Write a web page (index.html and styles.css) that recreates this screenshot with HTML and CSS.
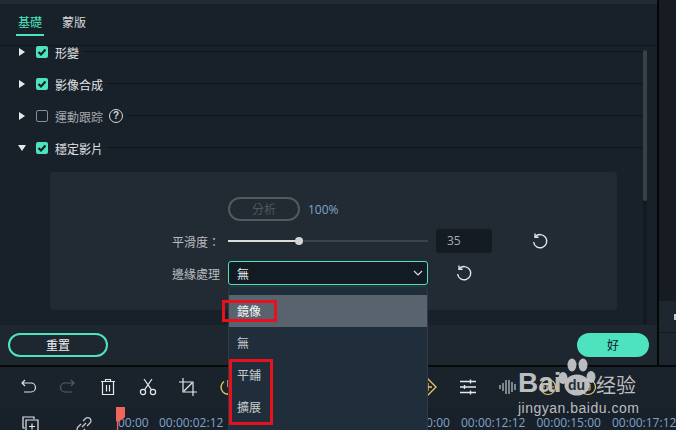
FILE: index.html
```html
<!DOCTYPE html>
<html lang="zh-Hant">
<head>
    <meta charset="UTF-8">
    <title>穩定影片</title>
    <link rel="stylesheet" href="styles.css">
</head>
<body>
    <div class="app">
        <div class="main">
            <div class="panel">
                <div class="tabs">
                    <span class="tab active">基礎</span>
                    <span class="tab">蒙版</span>
                </div>
                <div class="scroll-area">
                    <div class="props">
                        <div class="row">
                            <span class="arrow"></span>
                            <span class="check on"><svg width="12" height="12" viewBox="0 0 12 12"><path d="M2.500 6l2.500 2.500 4.500-5" fill="none" stroke="#10181f" stroke-width="2"/></svg></span>
                            <span class="row-label">形變</span>
                        </div>
                        <div class="row">
                            <span class="arrow"></span>
                            <span class="check on"><svg width="12" height="12" viewBox="0 0 12 12"><path d="M2.500 6l2.500 2.500 4.500-5" fill="none" stroke="#10181f" stroke-width="2"/></svg></span>
                            <span class="row-label">影像合成</span>
                        </div>
                        <div class="row">
                            <span class="arrow"></span>
                            <span class="check"></span>
                            <span class="row-label dim">運動跟踪</span>
                            <span class="help">?</span>
                        </div>
                        <div class="row">
                            <span class="arrow down"></span>
                            <span class="check on"><svg width="12" height="12" viewBox="0 0 12 12"><path d="M2.500 6l2.500 2.500 4.500-5" fill="none" stroke="#10181f" stroke-width="2"/></svg></span>
                            <span class="row-label">穩定影片</span>
                        </div>
                        <div class="card">
                            <div class="analyze-line">
                                <span class="analyze">分析</span>
                                <span class="percent">100%</span>
                            </div>
                            <div class="smooth-line">
                                <span class="field-label">平滑度：</span>
                                <div class="slider"><div class="slider-fill"></div><div class="slider-knob"></div></div>
                                <span class="num">35</span>
                                <svg class="reset" width="18" height="18" viewBox="0 0 18 18"><path d="M4.200 4.800A6.600 6.600 0 1 1 2.600 10" fill="none" stroke="#e4e6e8" stroke-width="1.400"/><path d="M4 1.600v3.600h3.600" fill="none" stroke="#e4e6e8" stroke-width="1.400"/></svg>
                            </div>
                            <div class="edge-line">
                                <span class="field-label">邊緣處理</span>
                                <div class="select">
                                    <span>無</span>
                                    <svg width="10" height="6" viewBox="0 0 10 6"><path d="M1 1l4 4 4-4" fill="none" stroke="#d8dadc" stroke-width="1.200"/></svg>
                                </div>
                                <svg class="reset" width="18" height="18" viewBox="0 0 18 18"><path d="M4.200 4.800A6.600 6.600 0 1 1 2.600 10" fill="none" stroke="#e4e6e8" stroke-width="1.400"/><path d="M4 1.600v3.600h3.600" fill="none" stroke="#e4e6e8" stroke-width="1.400"/></svg>
                            </div>
                        </div>
                    </div>
                    <div class="scrollbar"><div class="scroll-thumb"></div></div>
                </div>
                <div class="footer">
                    <span class="btn-reset">重置</span>
                    <span class="btn-ok">好</span>
                </div>
            </div>
            <div class="side">
                <div class="side-top"></div>
                <div class="side-mid"><span class="side-dot"></span></div>
                <div class="side-bottom"></div>
            </div>
        </div>

        <div class="toolbar">
            <svg width="18" height="18" viewBox="0 0 18 18"><path d="M3 5h9a4 4 0 0 1 0 9H5M6 2L3 5l3 3" fill="none" stroke="#dfe1e3" stroke-width="1.200"/></svg>
            <svg width="18" height="18" viewBox="0 0 18 18"><path d="M15 5H6a4 4 0 0 0 0 9h7M12 2l3 3-3 3" fill="none" stroke="#565c62" stroke-width="1.200"/></svg>
            <svg width="18" height="18" viewBox="0 0 18 18"><path d="M2 3.500h14M6.500 3V1.500h5V3M3.500 4v12.500h11V4M7.500 7v6.500M10.500 7v6.500" fill="none" stroke="#e6e8ea" stroke-width="1.200"/></svg>
            <svg width="18" height="18" viewBox="0 0 18 18"><circle cx="4" cy="14" r="2.600" fill="none" stroke="#e6e8ea" stroke-width="1.200"/><circle cx="14" cy="14" r="2.600" fill="none" stroke="#e6e8ea" stroke-width="1.200"/><path d="M5.500 11.800L13 1M12.500 11.800L5 1" fill="none" stroke="#e6e8ea" stroke-width="1.200"/></svg>
            <svg width="18" height="18" viewBox="0 0 18 18"><path d="M4 0v14h14M0 4h14v14M5 13L13 5" fill="none" stroke="#e6e8ea" stroke-width="1.200"/></svg>
            <svg width="18" height="18" viewBox="0 0 18 18"><path d="M5 3.500a7 7 0 1 0 8 0M9 2v7" fill="none" stroke="#e9c766" stroke-width="1.400"/></svg>
            <span class="tool-gap"></span>
            <svg width="18" height="18" viewBox="0 0 18 18"><path d="M9 1l8 8-8 8-8-8zM5 9h8M9 5v8" fill="none" stroke="#e9c766" stroke-width="1.300"/></svg>
            <svg width="18" height="18" viewBox="0 0 18 18"><path d="M1 3.500h16M1 9h16M1 14.500h16M11.500 1.500v4M5.500 7v4M11.500 12.500v4" fill="none" stroke="#e6e8ea" stroke-width="1.400"/></svg>
            <svg width="18" height="18" viewBox="0 0 18 18"><path d="M1 7v4M4 5v8M7 2v14M10 2v14M13 4v10M16 6v6" fill="none" stroke="#e6e8ea" stroke-width="1"/></svg>
            <svg width="18" height="18" viewBox="0 0 18 18"><circle cx="9" cy="9" r="7.500" fill="none" stroke="#e9c766" stroke-width="1.200"/><path d="M5 8v2M8 5v8M11 6v6M14 8v2" fill="none" stroke="#e9c766" stroke-width="1"/></svg>
            <svg width="18" height="18" viewBox="0 0 18 18"><circle cx="9" cy="9" r="7.500" fill="none" stroke="#e9c766" stroke-width="1.200"/><path d="M7 6h4v6H7M8 9h3" fill="none" stroke="#e9c766" stroke-width="1"/></svg>
        </div>

        <div class="ruler">
            <svg class="ruler-icon" width="18" height="18" viewBox="0 0 18 18"><path d="M12 3V1H1v11h2M4 4h12v13H4zM10 7.500v6M7 10.500h6" fill="none" stroke="#e6e8ea" stroke-width="1.200"/></svg>
            <svg class="ruler-icon link" width="18" height="18" viewBox="0 0 18 18"><path d="M8 5l2.500-2.500a3 3 0 0 1 4.500 4.500L12 10M10 13l-2.500 2.500a3 3 0 0 1-4.500-4.500L6 8M7 11l4-4" fill="none" stroke="#c7cacd" stroke-width="1.300"/></svg>
            <div class="times">
                <span class="time first">00:00</span>
                <span class="time">00:00:02:12</span>
                <span class="time after-menu">00:00:10:00</span>
                <span class="time">00:00:12:12</span>
                <span class="time">00:00:15:00</span>
                <span class="time">00:00:17:12</span>
            </div>
        </div>

        <div class="playhead"></div>

        <div class="dropdown">
            <div class="opt hover">鏡像</div>
            <div class="opt">無</div>
            <div class="opt">平鋪</div>
            <div class="opt">擴展</div>
        </div>

        <div class="mark mark-a"></div>
        <div class="mark mark-b"></div>

        <div class="watermark">
            <div class="wm-top">
                <span class="wm-bai">Bai</span>
                <div class="wm-paw">
                    <svg width="38" height="38" viewBox="0 0 38 38"><ellipse cx="5" cy="20" rx="4.500" ry="6" fill="#c9cacc"/><ellipse cx="14" cy="7" rx="4.500" ry="6.500" fill="#c9cacc"/><ellipse cx="25" cy="7" rx="4.500" ry="6.500" fill="#c9cacc"/><ellipse cx="33" cy="19" rx="4.500" ry="6" fill="#c9cacc"/><ellipse cx="19" cy="27" rx="12.500" ry="10.500" fill="#c9cacc"/></svg>
                    <span class="wm-du">du</span>
                </div>
                <span class="wm-cn">经验</span>
            </div>
            <div class="wm-url">jingyan.baidu.com</div>
        </div>
    </div>
</body>
</html>
```

FILE: styles.css
```css
* {
    box-sizing: border-box;
}
html, body {
    margin: 0;
    padding: 0;
}
body {
    width: 676px;
    height: 430px;
    overflow: hidden;
    font-family: "Noto Sans CJK TC", "Noto Sans", sans-serif;
    background: #000;
}
.app {
    position: relative;
    width: 676px;
    height: 430px;
    display: flex;
    flex-direction: column;
    overflow: hidden;
    background: #1e2630;
}
.main {
    display: flex;
    height: 367px;
    flex: none;
    border-bottom: 2px solid #08090b;
}
.panel {
    width: 657px;
    display: flex;
    flex-direction: column;
    background: #18202a;
    border-top: 4px solid #222b35;
}
.tabs {
    display: flex;
    gap: 16px;
    height: 32px;
    flex: none;
    padding: 7px 0 0 16px;
}
.tab {
    width: 28px;
    height: 25px;
    font-size: 12px;
    line-height: 22px;
    text-align: center;
    color: #d5d8da;
}
.tab.active {
    color: #4de3bf;
    border-bottom: 2px solid #4de3bf;
}
.scroll-area {
    flex: 1;
    display: flex;
    min-height: 0;
    background: linear-gradient(#10161c, #10161c) no-repeat 0 9px / 100% 1px;
}
.props {
    width: 643px;
}
.row {
    display: flex;
    align-items: center;
    height: 32px;
    padding-left: 19px;
}
.row::after {
    content: "";
    flex: 1;
    height: 1px;
    margin: -1px 0 0 4px;
    background: #10161c;
}
.arrow {
    width: 0;
    height: 0;
    margin-right: 11px;
    border-left: 6px solid #e6e8ea;
    border-top: 4px solid transparent;
    border-bottom: 4px solid transparent;
}
.arrow.down {
    margin-left: -1px;
    margin-right: 10px;
    border-top: 6px solid #e6e8ea;
    border-left: 4px solid transparent;
    border-right: 4px solid transparent;
    border-bottom: 0;
}
.check {
    width: 12px;
    height: 12px;
    margin-right: 7px;
    border: 1px solid #8b8f93;
    border-radius: 2px;
    display: flex;
}
.check.on {
    background: #4de3bf;
    border: 0;
}
.row-label {
    font-size: 12px;
    color: #e2e4e6;
}
.row-label.dim {
    color: #a4a8ac;
}
.help {
    width: 14px;
    height: 14px;
    margin-left: 6px;
    border: 1px solid #d8dadc;
    border-radius: 50%;
    font-family: "Liberation Sans", sans-serif;
    font-size: 10px;
    font-weight: bold;
    line-height: 12px;
    text-align: center;
    color: #d8dadc;
}
.card {
    width: 567px;
    height: 138px;
    margin: 8px 0 0 50px;
    padding-top: 25px;
    background: #222a34;
    border-radius: 4px;
}
.analyze-line {
    display: flex;
    align-items: center;
    height: 24px;
    margin-left: 178px;
}
.analyze {
    width: 72px;
    height: 24px;
    border: 2px solid #55595c;
    border-radius: 12px;
    font-size: 12px;
    line-height: 19px;
    text-align: center;
    color: #4f5963;
}
.percent {
    margin-left: 8px;
    font-family: "Open Sans", sans-serif;
    font-size: 12px;
    color: #7fa4c9;
}
.smooth-line, .edge-line {
    display: flex;
    align-items: center;
    height: 24px;
    margin: 8px 0 0 122px;
}
.field-label {
    width: 56px;
    font-size: 12px;
    white-space: nowrap;
    color: #b9bcbf;
}
.slider {
    position: relative;
    width: 200px;
    height: 2px;
    background: #3c424a;
}
.slider-fill {
    width: 71px;
    height: 2px;
    background: #dcdcdc;
}
.slider-knob {
    position: absolute;
    left: 67px;
    top: -3px;
    width: 8px;
    height: 8px;
    border-radius: 50%;
    background: #d4d4d4;
}
.num {
    width: 56px;
    height: 24px;
    margin-left: 8px;
    padding-left: 11px;
    background: #141b23;
    border-radius: 3px;
    font-family: "Open Sans", sans-serif;
    font-size: 12px;
    line-height: 24px;
    color: #a6abb0;
}
.smooth-line .reset {
    margin-left: 39px;
}
.edge-line .reset {
    margin-left: 27px;
}
.select {
    display: flex;
    align-items: center;
    justify-content: space-between;
    width: 200px;
    height: 24px;
    padding: 0 4px 0 8px;
    background: #121a23;
    border: 1px solid #4de3bf;
    border-radius: 3px;
    font-size: 12px;
    color: #e8eaec;
}
.scrollbar {
    width: 4px;
    height: 274px;
    margin-top: 14px;
    background: #121920;
}
.scroll-thumb {
    width: 4px;
    height: 151px;
    background: #3b4044;
    border-radius: 2px;
}
.footer {
    display: flex;
    justify-content: space-between;
    align-items: center;
    height: 40px;
    flex: none;
    padding: 0 8px;
    background: #1e2630;
}
.btn-reset {
    width: 100px;
    height: 24px;
    border: 2px solid #4de3bf;
    border-radius: 12px;
    font-size: 12px;
    line-height: 19px;
    text-align: center;
    color: #eceef0;
}
.btn-ok {
    width: 72px;
    height: 24px;
    background: #4de3bf;
    border-radius: 12px;
    font-size: 12px;
    line-height: 23px;
    text-align: center;
    color: #10181f;
}
.side {
    flex: 1;
    display: flex;
    flex-direction: column;
    border-left: 2px solid #050608;
}
.side-top {
    height: 301px;
    background: #161c22;
}
.side-mid {
    height: 32px;
    display: flex;
    align-items: center;
    background: #1e2630;
    border-bottom: 1px solid #12181e;
}
.side-dot {
    width: 2px;
    height: 6px;
    margin-left: 15px;
    background: #c9cbce;
}
.side-bottom {
    flex: 1;
    background: #1e2630;
}
.toolbar {
    display: flex;
    align-items: center;
    gap: 22px;
    height: 40px;
    flex: none;
    padding-left: 19px;
    background: #1a222c;
}
.tool-gap {
    width: 138px;
}
.ruler {
    flex: 1;
    display: flex;
    padding-top: 9px;
    background: #18202a linear-gradient(90deg, #8a9199 1px, transparent 1px) repeat-x 118px 100% / 25px 2px;
}
.ruler-icon {
    flex: none;
    margin-left: 22px;
}
.ruler-icon.link {
    margin-left: 35px;
}
.times {
    display: flex;
    flex: none;
    margin-left: 25px;
    font-family: "Open Sans", sans-serif;
    font-size: 12px;
    line-height: 14px;
    color: #7fa4c9;
}
.time {
    width: 75.5px;
    white-space: nowrap;
    flex: none;
}
.time.first {
    width: 41px;
}
.time.after-menu {
    margin-left: 151px;
}
.playhead {
    position: absolute;
    left: 116px;
    top: 407px;
    width: 9px;
    height: 23px;
    background: #f2665a;
    clip-path: polygon(0 0, 100% 0, 100% 45%, 25% 65%, 25% 100%, 10% 100%, 10% 65%, 0 60%);
}
.dropdown {
    position: absolute;
    left: 228px;
    top: 286px;
    width: 200px;
    height: 150px;
    padding-top: 8px;
    background: #202e3b;
    border: 1px solid #2e3a46;
    border-radius: 4px;
}
.opt {
    height: 32px;
    padding-left: 8px;
    font-size: 12px;
    line-height: 32px;
    color: #c8cbce;
}
.opt.hover {
    background: #59636d;
    color: #f4f5f6;
}
.mark {
    position: absolute;
    border: 3px solid #e8101c;
}
.mark-a {
    left: 222px;
    top: 300px;
    width: 55px;
    height: 22px;
}
.mark-b {
    left: 229px;
    top: 359px;
    width: 44px;
    height: 66px;
}
.watermark {
    position: absolute;
    left: 518px;
    top: 358px;
    width: 120px;
    color: #c9cacc;
    opacity: 0.92;
}
.wm-top {
    display: flex;
    align-items: flex-end;
    height: 38px;
}
.wm-bai {
    width: 40px;
    font-family: "Liberation Sans", sans-serif;
    font-size: 28px;
    font-weight: bold;
    line-height: 26px;
}
.wm-paw {
    position: relative;
    width: 38px;
    height: 38px;
    flex: none;
}
.wm-du {
    position: absolute;
    left: 10px;
    top: 19px;
    font-family: "Liberation Sans", sans-serif;
    font-size: 14px;
    font-weight: bold;
    line-height: 16px;
    color: #28313a;
}
.wm-cn {
    font-size: 20px;
    line-height: 22px;
    white-space: nowrap;
}
.wm-url {
    margin-top: 5px;
    font-family: "Liberation Sans", sans-serif;
    font-size: 14px;
    line-height: 14px;
    white-space: nowrap;
    letter-spacing: 0.5px;
}
```
